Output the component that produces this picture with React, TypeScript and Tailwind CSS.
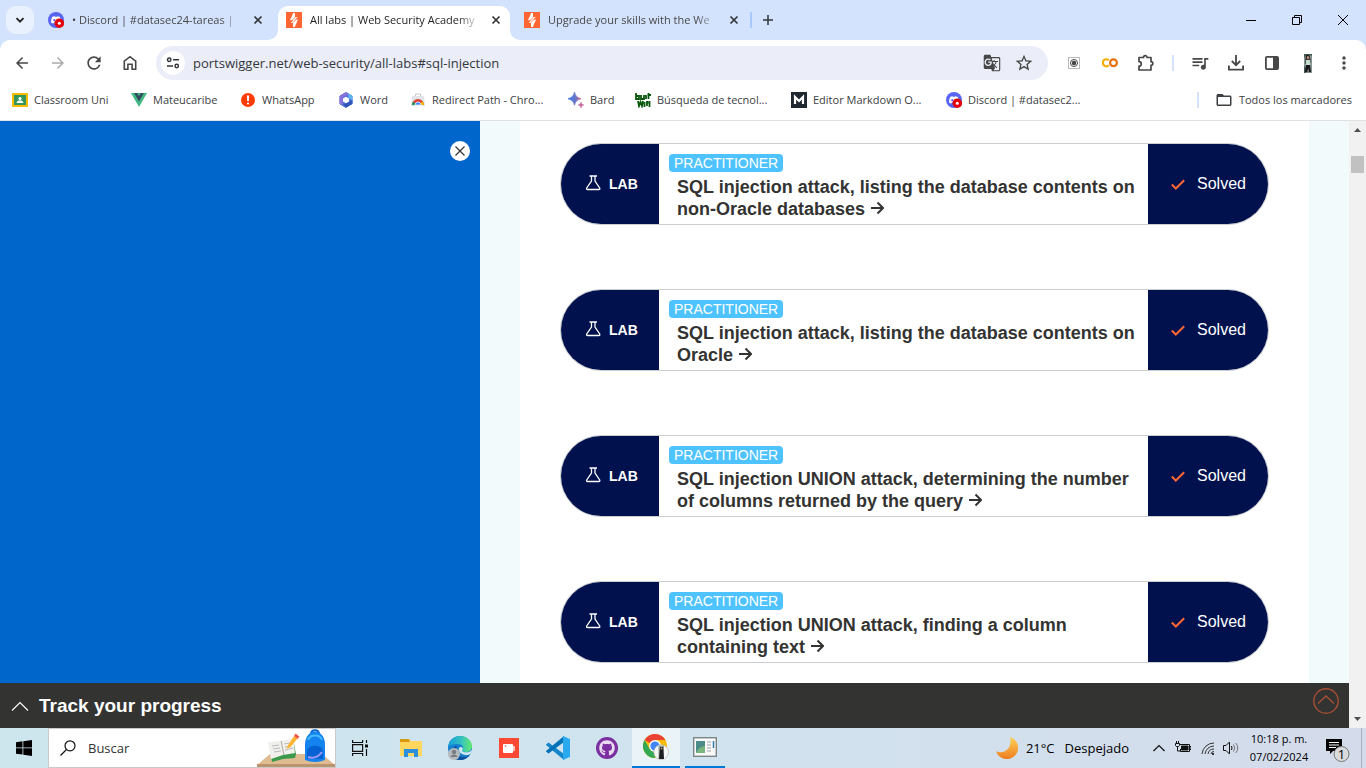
import React from "react";
import {
  MdArrowBack,
  MdArrowForward,
  MdFolderOpen,
  MdGTranslate,
  MdMoreVert,
  MdOutlineStarBorder,
  MdQueueMusic,
  MdRefresh,
} from "react-icons/md";
import { FaGithub } from "react-icons/fa";

const DiscordIcon = () => (
  <svg className="size-4 shrink-0" viewBox="0 0 16 16" aria-hidden="true">
    <circle cx="8" cy="8" r="8" fill="#5865f2" />
    <path d="M3 10.5c0-3 .8-5 1.6-5.7 1-.5 1.7-.6 2-.6l.3.6h2.2l.3-.6c.4 0 1.2.2 2.1.6.7.7 1.6 2.7 1.6 5.700-.8.8-1.700 1-2.300 1l-.6-.9H5.900l-.6.9c-.8 0-1.700-.4-2.300-1z" fill="#fff" />
    <circle cx="6.2" cy="8.2" r="1.1" fill="#5865f2" />
    <circle cx="11.3" cy="11.2" r="4.8" fill="#e3000b" />
    <circle cx="11.3" cy="11.2" r="1.5" fill="#fff" />
  </svg>
);

const PortSwiggerIcon = () => (
  <svg className="size-4 shrink-0" viewBox="0 0 16 16" aria-hidden="true">
    <rect width="16" height="16" fill="#ff6633" />
    <path d="M7.200 1H9v4.200h3.200L7.800 8.200H4z" fill="#fff" />
    <path d="M8.800 15H7v-4.200H4.600L8.200 7.400H12z" fill="#fff" />
    <path d="M9.300 5.200L4.600 9.800M11.500 5.800L7 10.600" stroke="#ff6633" strokeWidth=".7" />
  </svg>
);

const CloseIcon = () => (
  <svg className="size-3" viewBox="0 0 12 12" aria-hidden="true">
    <path d="M2.5 2.5l7 7M9.5 2.5l-7 7" stroke="#333639" strokeWidth="1.7" />
  </svg>
);

const HomeIcon = () => (
  <svg className="size-5" viewBox="0 0 20 20" fill="none" stroke="currentColor" strokeWidth="1.6" aria-hidden="true">
    <path d="M4.3 8.2L10 3.7l5.7 4.5v8.1h-3.600v-5H7.900v5H4.300z" />
  </svg>
);

const PuzzleIcon = () => (
  <svg className="size-[18px]" viewBox="0 0 18 18" fill="none" stroke="currentColor" strokeWidth="1.7" strokeLinejoin="round" aria-hidden="true">
    <path d="M2 3.500h4.500a1.800 1.800 0 0 1 3.600 0H14v4.200a1.800 1.800 0 0 1 0 3.600V16H2v-3.800a2.300 2.300 0 0 0 0-4.600z" />
  </svg>
);

const Flare = ({ side }: { side: "left" | "right" }) => (
  <svg
    className={side === "left" ? "absolute bottom-0 right-full size-[10px]" : "absolute bottom-0 left-full size-[10px]"}
    viewBox="0 0 10 10"
    aria-hidden="true"
  >
    <path d={side === "left" ? "M10 0v10H0A10 10 0 0 0 10 0z" : "M0 0v10h10A10 10 0 0 1 0 0z"} fill="#fff" />
  </svg>
);

function Tab({ title, icon, active }: { title: string; icon: React.ReactNode; active?: boolean }) {
  return (
    <div
      role="tab"
      aria-selected={!!active}
      className={
        active
          ? "relative flex h-[34px] w-[232px] items-center rounded-t-[10px] bg-white px-2 pb-1.5 text-[#1f1f1f]"
          : "flex h-[34px] w-[232px] items-center px-2 pb-1.5 text-[#474747]"
      }
    >
      {active && <Flare side="left" />}
      {icon}
      <span className="ml-2 w-[172px] whitespace-pre text-[11px] leading-4 [mask-image:linear-gradient(90deg,#000_86%,transparent_99%)]">
        {title}
      </span>
      <button type="button" aria-label="Cerrar" className="ml-auto flex w-3 items-center justify-center">
        <CloseIcon />
      </button>
      {active && <Flare side="right" />}
    </div>
  );
}

function TabStrip() {
  return (
    <header className="flex h-10 shrink-0 items-end bg-[#d3e3fd]">
      <button type="button" aria-label="Buscar pestañas" className="mx-1.5 mb-1.5 flex size-7 items-center justify-center rounded-[10px] bg-[#e9f1fe]">
        <svg className="size-3" viewBox="0 0 12 12" fill="none" stroke="#1f1f1f" strokeWidth="1.8" aria-hidden="true">
          <path d="M2.5 4.2L6 7.7l3.5-3.5" />
        </svg>
      </button>
      <div role="tablist" className="flex items-end gap-1.5">
        <Tab icon={<DiscordIcon />} title="• Discord | #datasec24-tareas | " />
        <Tab active icon={<PortSwiggerIcon />} title="All labs | Web Security Academy" />
        <Tab icon={<PortSwiggerIcon />} title="Upgrade your skills with the We" />
      </div>
      <span className="mb-3 ml-0.5 h-4 w-0.5 bg-[#a8c7fa]" />
      <button type="button" aria-label="Nueva pestaña" className="mb-3 ml-2 flex size-4 items-center justify-center">
        <svg className="size-4" viewBox="0 0 16 16" stroke="#333639" strokeWidth="1.5" aria-hidden="true">
          <path d="M8 3v10M3 8h10" />
        </svg>
      </button>
      <div className="ml-auto flex h-10">
        <button type="button" aria-label="Minimizar" className="flex w-[46px] items-center justify-center">
          <svg className="size-[10px]" viewBox="0 0 10 10" aria-hidden="true"><path d="M0 5.5h10" stroke="#000" /></svg>
        </button>
        <button type="button" aria-label="Restaurar" className="flex w-[46px] items-center justify-center">
          <svg className="size-[10px]" viewBox="0 0 10 10" fill="none" stroke="#000" aria-hidden="true"><path d="M.5 2.5h7v7h-7zM2.5 2.5v-2h7v7h-2" /></svg>
        </button>
        <button type="button" aria-label="Cerrar ventana" className="flex w-[46px] items-center justify-center">
          <svg className="size-[10px]" viewBox="0 0 10 10" stroke="#000" aria-hidden="true"><path d="M0 0l10 10M10 0L0 10" /></svg>
        </button>
      </div>
    </header>
  );
}

function ToolButton({ label, children }: { label: string; children: React.ReactNode }) {
  return (
    <button type="button" aria-label={label} className="flex size-9 shrink-0 items-center justify-center text-[#474747]">
      {children}
    </button>
  );
}

function Portrait({ className }: { className: string }) {
  return (
    <svg className={className} viewBox="0 0 8 19" preserveAspectRatio="none" aria-hidden="true">
      <rect width="8" height="19" fill="#879490" />
      <path d="M0 0h8v2L6 1H2L0 4zM0 12l2 2v5H0z" fill="#3f5a50" />
      <path d="M2 1h3.500L6.500 6v3l-5 1V5z" fill="#211e22" />
      <ellipse cx="4" cy="3.600" rx="1.300" ry="1.700" fill="#ba8c7a" />
      <path d="M2 6l4-.3L6.500 11H2z" fill="#c4dccf" />
      <path d="M2 11h4l1 7H5l-.8-4-1 4H1z" fill="#17171b" />
    </svg>
  );
}

function Toolbar() {
  return (
    <div className="bg-[#d3e3fd]">
      <div className="flex h-[46px] items-center rounded-t-[10px] bg-white px-1">
        <ToolButton label="Atrás"><MdArrowBack className="size-[18px]" /></ToolButton>
        <button type="button" disabled aria-label="Adelante" className="flex size-9 items-center justify-center text-[#ababab]">
          <MdArrowForward className="size-[18px]" />
        </button>
        <ToolButton label="Recargar"><MdRefresh className="size-5" /></ToolButton>
        <ToolButton label="Inicio"><HomeIcon /></ToolButton>
        <div className="mx-2 flex h-[34px] flex-1 items-center rounded-full bg-[#ebeef8] pl-[5px] pr-3">
          <button type="button" aria-label="Información del sitio" className="flex size-6 items-center justify-center rounded-full bg-white">
            <svg className="size-4" viewBox="0 0 16 16" fill="none" stroke="#333639" strokeWidth="1.5" aria-hidden="true">
              <circle cx="4.2" cy="4.7" r="1.7" /><path d="M8 4.7h6M2 11h6" /><circle cx="11.7" cy="11" r="1.7" />
            </svg>
          </button>
          <input aria-label="Dirección" defaultValue="portswigger.net/web-security/all-labs#sql-injection" className="ml-2 min-w-0 flex-1 bg-transparent text-[13px] leading-5 text-[#33373c] outline-none" />
          <button type="button" aria-label="Traducir" className="flex w-10 items-center justify-center text-[#474747]"><MdGTranslate className="size-[18px]" /></button>
          <button type="button" aria-label="Agregar a marcadores" className="flex size-6 items-center justify-center text-[#474747]"><MdOutlineStarBorder className="size-5" /></button>
        </div>
        <ToolButton label="Extensión">
          <svg className="size-3" viewBox="0 0 12 12" aria-hidden="true">
            <rect x=".5" y=".5" width="11" height="11" fill="#fff" stroke="#bbb" /><circle cx="6" cy="6" r="3.5" fill="none" stroke="#444" /><circle cx="6" cy="6" r="2.2" fill="#444" />
          </svg>
        </ToolButton>
        <ToolButton label="Colab">
          <svg className="size-4" viewBox="0 0 16 16" fill="none" strokeWidth="2.2" aria-hidden="true">
            <path d="M6.8 5.300a3.500 3.500 0 1 0 0 5" stroke="#f9ab00" /><circle cx="11.5" cy="7.800" r="3.400" stroke="#e8710a" />
          </svg>
        </ToolButton>
        <ToolButton label="Extensiones"><PuzzleIcon /></ToolButton>
        <span className="mx-2 h-4 w-0.5 bg-[#d3e3fd]" />
        <ToolButton label="Control de medios"><MdQueueMusic className="size-5" /></ToolButton>
        <ToolButton label="Descargas">
          <svg className="size-4" viewBox="0 0 16 16" fill="none" stroke="currentColor" strokeWidth="1.8" aria-hidden="true">
            <path d="M8 0v10M3.8 6L8 10.2 12.2 6M.9 10.5v4.200h14.200v-4.200" />
          </svg>
        </ToolButton>
        <ToolButton label="Panel lateral">
          <svg className="size-4" viewBox="0 0 16 16" aria-hidden="true">
            <rect x="1.9" y="1.9" width="12.2" height="12.2" rx="1" fill="none" stroke="currentColor" strokeWidth="1.8" /><path d="M9 2h5v12H9z" fill="currentColor" />
          </svg>
        </ToolButton>
        <ToolButton label="Perfil"><Portrait className="h-[19px] w-2" /></ToolButton>
        <ToolButton label="Menú"><MdMoreVert className="size-5" /></ToolButton>
      </div>
    </div>
  );
}

const bookmarks = [
  {
    label: "Classroom Uni", width: "w-[119px]",
    icon: <><rect y="1" width="16" height="14" rx="1" fill="#fbbc04" /><path d="M2 3h12v10H2z" fill="#36965b" /><circle cx="8" cy="6.5" r="1.6" fill="#fff" /><path d="M4.5 11c.3-2 1.800-2.500 3.500-2.500s3.200.5 3.500 2.500z" fill="#fff" /></>,
  },
  {
    label: "Mateucaribe", width: "w-[109px]",
    icon: <><path d="M0 1h16L8 15z" fill="#41b883" /><path d="M3.2 1h3L8 4.2 9.800 1h3L8 9.500z" fill="#35495e" /></>,
  },
  {
    label: "WhatsApp", width: "w-[98px]",
    icon: <><circle cx="8" cy="8" r="7" fill="#ff3d00" /><path d="M8 3.5V9" stroke="#fff" strokeWidth="2" /><circle cx="8" cy="11.500" r="1.100" fill="#fff" /></>,
  },
  {
    label: "Word", width: "w-[72px]",
    icon: <><path d="M8 .5l6 3.500v7.500L8 15.500 2 12V4z" fill="#4b6fd8" stroke="#4b6fd8" strokeLinejoin="round" /><path d="M8 .3L1.500 4v7.500l3.500 1.800V6l5.500-4z" fill="#8a72dc" /><path d="M10 1.300l4.500 2.700v4.500L10.500 6z" fill="#63b4ee" /><path d="M5 12.500l6-2.500 3.500-2v4L8 15.600z" fill="#3156b8" /><path d="M8 4.700l3 1.800v3l-3 1.800-3-1.800v-3z" fill="#fff" /></>,
  },
  {
    label: "Redirect Path - Chro...", width: "w-[158px]",
    icon: <><path d="M2 4h12l1 10H1z" fill="#e2e4e7" /><path d="M5.5 4V2h5v2" fill="none" stroke="#c6cacf" /><path d="M2 13a6 6 0 0 1 12 0z" fill="#dc4437" /><path d="M2 13a6 6 0 0 1 1-3.300L7 13z" fill="#129d58" /><path d="M14 13a6 6 0 0 0-1.200-3.700L8.500 13z" fill="#f4b400" /><path d="M5 13a3 3 0 0 1 6 0z" fill="#4285f4" stroke="#fff" strokeWidth=".7" /></>,
  },
  {
    label: "Bard", width: "w-[67px]",
    icon: <><defs><linearGradient id="bard"><stop stopColor="#387bea" /><stop offset=".6" stopColor="#6d75c6" /><stop offset="1" stopColor="#d76585" /></linearGradient></defs><path d="M6.5 0c.8 4 2.500 5.500 6.500 6.700-4 1.200-5.700 2.600-6.500 6.500C5.700 9.300 4 7.900 0 6.700 4 5.500 5.700 4 6.500 0z" fill="url(#bard)" stroke="url(#bard)" strokeWidth=".8" /><path d="M13 10c.4 2 1 2.600 3 3-2 .4-2.600 1-3 3-.4-2-1-2.600-3-3 2-.4 2.600-1 3-3z" fill="#c16694" stroke="#c16694" strokeWidth=".5" /></>,
  },
  {
    label: "Búsqueda de tecnol...", width: "w-[156px]",
    icon: <g fill="none" stroke="#08580c" strokeWidth="1.8"><path d="M1 1v6h3V4H1M6 3v4h3V3M11 3v4M13.500 1v6M12.500 3H16M3 9l1 5 1.500-4L7 14l1-5M9.500 10v5M12 9v5M11 10.500h2.500M14.500 9v6" /></g>,
  },
  {
    label: "Editor Markdown O...", width: "w-[155px]",
    icon: <><rect width="16" height="16" fill="#202730" /><path d="M4 12V5l4 4 4-4v7" fill="none" stroke="#fff" strokeWidth="2.2" /></>,
  },
];

function Bookmarks() {
  return (
    <nav aria-label="Marcadores" className="flex h-[35px] shrink-0 items-center border-b border-[#dfe1e5] bg-white pb-1.5 pl-3 pr-3.5 text-[11px] leading-4 text-[#3c4043]">
      {bookmarks.map((b) => (
        <a key={b.label} href="#" className={`flex shrink-0 items-center gap-1.5 whitespace-nowrap ${b.width}`}>
          <svg className="size-4 shrink-0" viewBox="0 0 16 16" aria-hidden="true">{b.icon}</svg>
          {b.label}
        </a>
      ))}
      <a href="#" className="flex items-center gap-1.5 whitespace-nowrap"><DiscordIcon />Discord | #datasec2...</a>
      <span className="ml-auto mr-4 h-4 w-0.5 bg-[#d3e3fd]" />
      <a href="#" className="flex items-center gap-1.5 whitespace-nowrap"><MdFolderOpen className="size-[18px]" />Todos los marcadores</a>
    </nav>
  );
}

const labs = [
  "SQL injection attack, listing the database contents on non-Oracle databases",
  "SQL injection attack, listing the database contents on Oracle",
  "SQL injection UNION attack, determining the number of columns returned by the query",
  "SQL injection UNION attack, finding a column containing text",
];

function LabCard({ title }: { title: string }) {
  return (
    <article className="flex h-[82px] shrink-0 overflow-hidden rounded-full border border-[#c9cdcd] bg-white">
      <div className="flex w-[98px] shrink-0 items-center bg-[#00114d] pl-6 text-white">
        <svg className="mb-0.5 size-4" viewBox="0 0 16 16" fill="none" stroke="currentColor" strokeWidth="1.3" aria-hidden="true">
          <path d="M4.500 1h7.500M6.500 1v5L1.700 13q-.6 1.500 1 1.500h11q1.600 0 1-1.500L10 6V1" />
        </svg>
        <span className="ml-2 text-[14px] font-bold leading-5">LAB</span>
      </div>
      <div className="min-w-0 flex-1 pl-2.5 pr-2 pt-2.5">
        <span className="block h-[18px] w-fit rounded bg-[#4fc3ff] px-[5px] text-[14px] leading-[18px] text-white">PRACTITIONER</span>
        <h2 className="ml-2 mt-1 text-[18px] font-bold leading-[22px] text-[#333332]">
          <a href="#">
            {title}{" "}
            <svg className="inline size-3.5 align-baseline" viewBox="0 0 14 14" fill="none" stroke="currentColor" strokeWidth="2" aria-hidden="true">
              <path d="M1 7h12M7.500 1.500L13 7l-5.500 5.500" />
            </svg>
          </a>
        </h2>
      </div>
      <div className="flex w-[120px] shrink-0 items-center bg-[#00114d] pl-[23px] text-white">
        <svg className="size-3.5" viewBox="0 0 14 14" fill="none" stroke="#ff6633" strokeWidth="2" aria-hidden="true">
          <path d="M.8 7.500l4 4L13.200 3.200" />
        </svg>
        <span className="ml-3 text-[16px] leading-5">Solved</span>
      </div>
    </article>
  );
}

function Page() {
  return (
    <div className="flex min-h-0 flex-1 font-['Liberation_Sans',Arial,sans-serif]">
      <div className="flex min-w-0 flex-1 flex-col">
        <div className="flex min-h-0 flex-1">
          <aside className="flex w-[480px] shrink-0 items-start justify-end bg-[#0066cc] pr-2.5 pt-5">
            <button type="button" aria-label="Cerrar panel" className="flex size-5 items-center justify-center rounded-full bg-white">
              <svg className="size-[10px]" viewBox="0 0 10 10" stroke="#333332" strokeWidth="1.2" aria-hidden="true"><path d="M.5.5l9 9M9.500.5l-9 9" /></svg>
            </button>
          </aside>
          <main className="flex min-w-0 flex-1 flex-col overflow-hidden bg-[#f2fafc] px-10">
            <div className="flex flex-1 flex-col gap-16 bg-white px-10 pt-[22px]">
              {labs.map((title) => <LabCard key={title} title={title} />)}
            </div>
          </main>
        </div>
        <footer className="flex h-[45px] shrink-0 items-center bg-[#333332] pl-[11px] pr-2.5 text-white">
          <button type="button" className="flex items-center gap-2.5 text-[19px] font-bold leading-6">
            <svg className="size-[18px]" viewBox="0 0 18 18" fill="none" stroke="#fff" strokeWidth="1.1" aria-hidden="true"><path d="M1 13.500l8-8 8 8" /></svg>
            Track your progress
          </button>
          <a href="#" aria-label="Volver arriba" className="mb-2.5 ml-auto">
            <svg className="size-[26px]" viewBox="0 0 26 26" fill="none" stroke="#a64f33" strokeWidth="1.4" aria-hidden="true"><circle cx="13" cy="13" r="12.200" /><path d="M5 15.500l8-7.500 8 7.500" /></svg>
          </a>
        </footer>
      </div>
      <div aria-hidden="true" className="flex w-[17px] shrink-0 flex-col items-center bg-[#f1f1f1]">
        <svg className="h-[17px] w-[7px]" viewBox="0 0 7 17"><path d="M0 11l3.500-4L7 11z" fill="#505050" /></svg>
        <div className="mt-[18px] h-[17px] w-[13px] bg-[#c1c1c1]" />
        <svg className="mt-auto h-[17px] w-[7px]" viewBox="0 0 7 17"><path d="M0 6l3.500 4L7 6z" fill="#505050" /></svg>
      </div>
    </div>
  );
}

const apps = [
  {
    name: "Explorador de archivos",
    icon: <><path d="M1 3h9l2 2h11v15H1z" fill="#ffd75e" /><path d="M1 3h9l1 3H1z" fill="#d99a13" /><path d="M5 21v-8h14v8h-4v-4H9v4z" fill="#2d8fdb" /></>,
  },
  {
    name: "Edge",
    icon: <><defs><linearGradient id="edge" x2="1"><stop stopColor="#139fd9" /><stop offset=".55" stopColor="#35c1c0" /><stop offset="1" stopColor="#66eb6e" /></linearGradient></defs><circle cx="12" cy="12" r="12" fill="#1580cc" /><path d="M9 10c-3 6 2 11 7 11 3 0 5-1 6.500-3C20 22 16 24 12 24 6 24 3 19 4 15s3-5 5-5z" fill="#0c4f9e" /><path d="M0 11C1 4 6 0 12 0c7 0 12 5 12 10 0 4-3 6-6.500 6-3 0-4-1-3-2.200C16.500 11 14 8 9.500 8 5 8 1 9 0 11z" fill="url(#edge)" /><path d="M11 12c-1 3 2 7 7 7 2.500 0 4-.6 5-1.500.5-1.500.9-2.500.9-4-1 2-3.500 2.800-6 2.800-3.500 0-4.500-1.500-3.200-3C15.500 12 13 9.500 11 12z" fill="#d1e7ef" /><circle cx="6" cy="18" r="6" fill="#b4babd" /><circle cx="6" cy="16" r="2.200" fill="#777d82" /><path d="M2.500 21c.5-3.500 6.500-3.500 7 0z" fill="#777d82" /></>,
  },
  {
    name: "Grabador",
    icon: <><path d="M2 2h20v20H2z" fill="#fb4934" /><rect x="6" y="8" width="10" height="9" rx="1" fill="#fff" /><path d="M16 9.500l2 1v4l-2 1z" fill="#ffc3ba" /><circle cx="8.500" cy="10" r=".8" fill="#fb4934" /></>,
  },
  {
    name: "Visual Studio Code",
    icon: <><path d="M0 8.500L2.500 6.500 18 18v6L0 9z" fill="#1686cb" /><path d="M0 15.500l2.500 2L18 6V0L0 15z" fill="#0072b5" /><path d="M17 0l7 3v18l-7 3z" fill="#2aa9f0" /></>,
  },
];

function AppCell({ name, children }: { name: string; children: React.ReactNode }) {
  return <button type="button" aria-label={name} className="flex h-10 w-12 items-center justify-center">{children}</button>;
}

function Taskbar() {
  return (
    <footer className="flex h-10 shrink-0 items-center bg-linear-to-r from-[#cde6ee] via-[#d0e3ee] to-[#d4dbea] text-black">
      <AppCell name="Inicio">
        <svg className="size-4" viewBox="0 0 16 16" aria-hidden="true"><path d="M0 2.200L6.500 1.300v6.200H0zM7.300 1.200L16 0v7.500H7.300zM0 8.300h6.500v6.300L0 13.700zM7.300 8.300H16V16l-8.700-1.200z" /></svg>
      </AppCell>
      <div className="flex h-10 w-[288px] items-center border border-[#c9c9c9] bg-white pl-[11px]">
        <svg className="size-4" viewBox="0 0 16 16" fill="none" stroke="#111" strokeWidth="1.2" aria-hidden="true"><circle cx="10" cy="5.800" r="5" /><path d="M6.500 9.500L.5 15.500" /></svg>
        <input aria-label="Buscar" placeholder="Buscar" className="ml-3 w-32 bg-transparent text-[13px] leading-5 outline-none placeholder:text-[#333]" />
        <svg className="ml-auto h-[38px] w-[78px]" viewBox="0 0 78 38" aria-hidden="true">
          <path d="M0 36l13-11h52l13 11z" fill="#dfbb92" /><path d="M0 35h78v3H0z" fill="#b9946d" />
          <path d="M12 15l3 18 11-3 12-1 1-4-3-15z" fill="#3b9b4d" /><path d="M11 13l12-1 13-3 2 15-12 2-12 4z" fill="#f2f0eb" /><path d="M24 12l3 14" stroke="#aaa" /><path d="M15 17l7-1M16 20l7-1M17 23l7-1M27 15l6-1M28 18l6-1M28 21l8-2" stroke="#b8bac2" />
          <path d="M30 18l7-11 3.500 2.500-7.500 9-4 1z" fill="#ffb52e" /><path d="M37 7l1.500-2.500 4 3-2 2.500z" fill="#f45a43" />
          <path d="M54 5c0-5 8-5 8 0" fill="none" stroke="#0866cf" strokeWidth="2" /><path d="M48 16c0-18 20-18 20 0v15q-10 4-20 0z" fill="#1583ef" /><path d="M51 11c2-6 12-6 14 0" fill="none" stroke="#44baff" strokeWidth="2" /><path d="M50 22c1-7 15-7 16 0v8H50z" fill="#0662d2" /><path d="M51 28q8 3 14-5" fill="none" stroke="#9f9bfa" strokeWidth="2" />
        </svg>
      </div>
      <AppCell name="Vista de tareas">
        <svg className="size-4" viewBox="0 0 16 16" fill="none" stroke="#111" strokeWidth="1.2" aria-hidden="true"><path d="M.6 0v2.500h10V0M.6 16v-2.500h10V16M.6 4.700h10v6.600H.6zM14.500 0v3M14.500 9v7" /><path d="M13 4.500h3v3h-3z" fill="#111" stroke="none" /></svg>
      </AppCell>
      <div className="ml-[3px] flex gap-px">
        {apps.map((a) => (
          <AppCell key={a.name} name={a.name}><svg className="size-6" viewBox="0 0 24 24" aria-hidden="true">{a.icon}</svg></AppCell>
        ))}
        <AppCell name="GitHub Desktop">
          <span className="flex size-[22px] items-center justify-center rounded-full bg-[#7b2fa0] text-[#ecdcf3]"><FaGithub className="size-4" /></span>
        </AppCell>
        <button type="button" aria-label="Chrome" className="flex h-10 w-12 items-center justify-center border-b-2 border-[#0078d7] bg-[#eaf3f7]">
          <svg className="size-[26px]" viewBox="0 0 26 26" aria-hidden="true">
            <circle cx="12" cy="12" r="12" fill="#fbbc04" /><path d="M12 12L1.600 6A12 12 0 0 1 22.400 6H12z" fill="#ea4335" /><path d="M12 24A12 12 0 0 1 1.600 6l5.200 9L12 18z" fill="#34a853" /><circle cx="12" cy="12" r="6" fill="#fff" /><circle cx="12" cy="12" r="4.600" fill="#4285f4" />
            <circle cx="18.200" cy="18.200" r="7.400" fill="#f7f7f7" stroke="#b0b0b0" strokeWidth=".6" /><path d="M15.500 11.500h5.500v13.500h-5.500z" fill="#92a398" /><path d="M17 13h3l1 12h-5z" fill="#1e1c20" /><circle cx="18.500" cy="14.500" r="1" fill="#c89780" />
          </svg>
        </button>
        <button type="button" aria-label="Ventana" className="ml-1 flex h-10 w-10 items-center justify-center border-b-2 border-[#0078d7]">
          <svg className="h-5 w-6" viewBox="0 0 24 20" aria-hidden="true"><rect x=".7" y=".7" width="22.600" height="18.600" fill="#f9f9f9" stroke="#7d8587" strokeWidth="1.400" /><path d="M3 4h9v12H3z" fill="#4b8c88" /><path d="M3 16q2-6 9-7v7z" fill="#79b57d" /><path d="M14 5h4M14 8h4M14 11h4M14 14h4" stroke="#bbc0c2" strokeWidth="1.500" /><path d="M20.500 4v7" stroke="#2e7eb4" strokeWidth="1.500" /></svg>
        </button>
      </div>
      <div className="ml-auto flex h-full items-center">
        <svg className="size-[22px]" viewBox="0 0 22 22" aria-hidden="true"><defs><linearGradient id="moon" x2="0" y2="1"><stop stopColor="#ffd153" /><stop offset="1" stopColor="#ed7d22" /></linearGradient></defs><path d="M14 0a11.300 11.300 0 1 1-14 14c7 4 17-2 14-14z" fill="url(#moon)" /></svg>
        <span className="ml-2 text-[13px] leading-5">21°C</span>
        <span className="ml-2.5 text-[13px] leading-5">Despejado</span>
        <svg className="ml-6 size-3" viewBox="0 0 12 12" fill="none" stroke="#111" strokeWidth="1.2" aria-hidden="true"><path d="M.5 9L6 3.500 11.500 9" /></svg>
        <svg className="ml-2.5 size-4" viewBox="0 0 16 16" fill="none" stroke="#111" aria-hidden="true"><path d="M5 4.500h9.500v7h-9V9M14.500 6.500H16v3h-1.500M1.500 1v2M3.500 1v2M.5 3.500h4v2l-1 1h-2l-1-1zM2.500 6v5h3" /><path d="M6.500 6h6.500v4H6.500z" fill="#111" /></svg>
        <svg className="ml-2.5 size-[14px]" viewBox="0 0 14 14" fill="none" stroke="#333" aria-hidden="true"><path d="M1 13A12 12 0 0 1 13 2M4 13a9 9 0 0 1 9-8M7 13a6 6 0 0 1 6-5M10 13a3 3 0 0 1 3-2.500" /><path d="M11 12h2v2h-2z" fill="#333" stroke="none" /></svg>
        <svg className="ml-2 size-4" viewBox="0 0 16 16" fill="none" stroke="#111" aria-hidden="true"><path d="M.5 5.500H3L6.500 2v12L3 10.500H.5zM8.500 6q1 2 0 4" /><path d="M10.500 4.500q2.500 3.500 0 7M12.800 3q4 5 0 10" stroke="#777" /></svg>
        <time className="ml-2.5 w-[60px] whitespace-nowrap text-center text-[11px] leading-[18px]">10:18 p. m.<br />07/02/2024</time>
        <button type="button" aria-label="Notificaciones" className="ml-4">
          <svg className="size-7" viewBox="0 0 28 28" aria-hidden="true">
            <path d="M1 5h16v12H8l-3 3v-3H1z" /><path d="M4 8.500h10M4 11h10M4 13.500h7" stroke="#fff" />
            <circle cx="16.500" cy="20" r="7.500" fill="#d8dadc" stroke="#777" />
            <text x="16.500" y="24.500" textAnchor="middle" fontSize="13">1</text>
          </svg>
        </button>
        <span className="ml-2 mr-1 h-full w-px bg-[#a9b1bb]" />
      </div>
    </footer>
  );
}

export default function App() {
  return (
    <div className="flex h-screen flex-col overflow-hidden bg-white font-['Open_Sans','Noto_Sans',sans-serif]">
      <TabStrip />
      <Toolbar />
      <Bookmarks />
      <Page />
      <Taskbar />
    </div>
  );
}
